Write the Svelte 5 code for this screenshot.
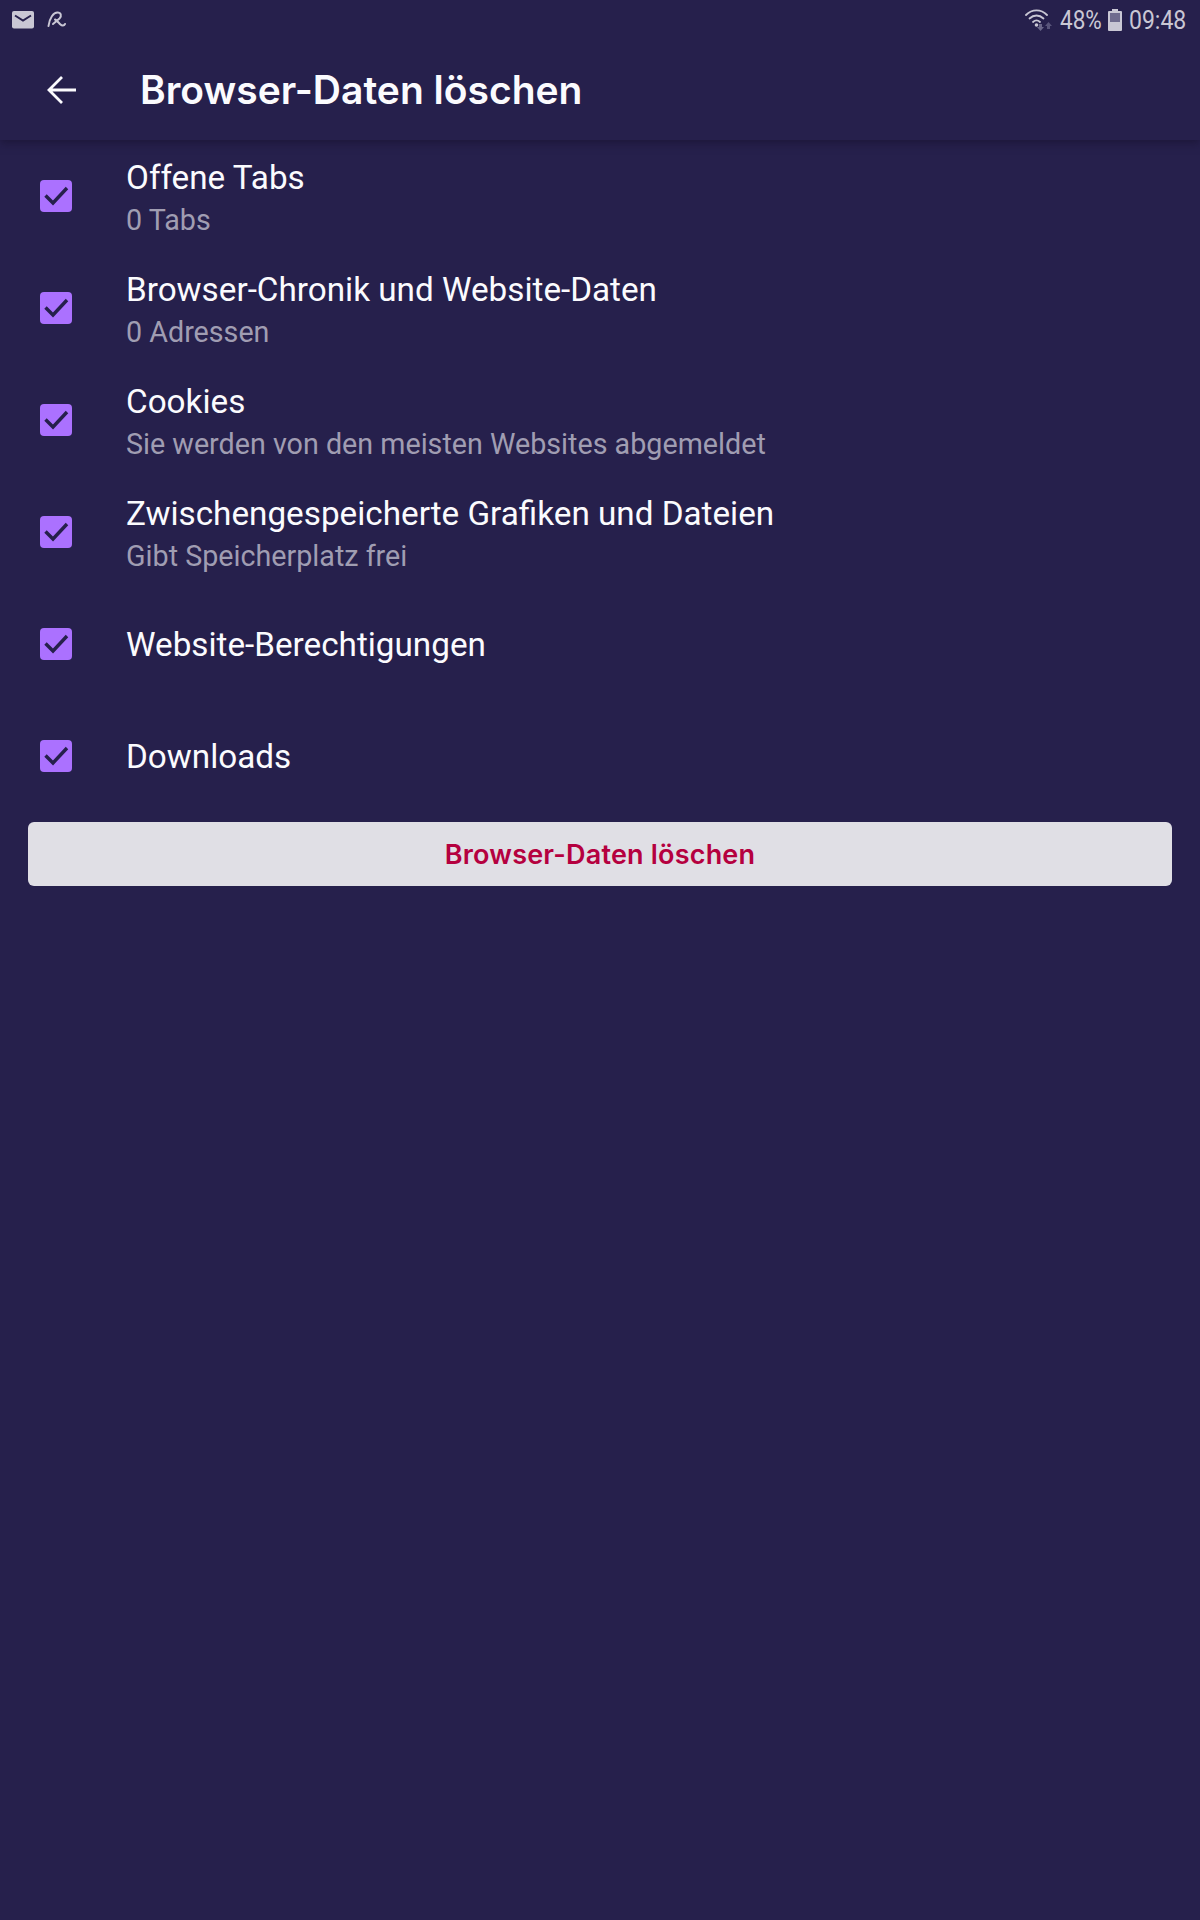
<script lang="ts">
  const rows = [
    { title: "Offene Tabs", sub: "0 Tabs" },
    { title: "Browser-Chronik und Website-Daten", sub: "0 Adressen" },
    { title: "Cookies", sub: "Sie werden von den meisten Websites abgemeldet" },
    { title: "Zwischengespeicherte Grafiken und Dateien", sub: "Gibt Speicherplatz frei" },
    { title: "Website-Berechtigungen", sub: "" },
    { title: "Downloads", sub: "" },
  ];
</script>

<main>
  <header class="top">
    <div class="status">
      <div class="left">
        <svg class="mail" width="22" height="18" viewBox="0 0 22 18" aria-hidden="true">
          <rect width="22" height="17.5" rx="2" fill="#c9c7d4" />
          <path d="M3 4.500 11 9.500 19 4.500" fill="none" stroke="#26204c" stroke-width="2" />
        </svg>
        <svg width="20" height="18" viewBox="0 0 20 18" aria-hidden="true">
          <path
            d="M1.500 15C2.500 7 6.500 1.500 10.500 1.500c3.500 0 4.500 3.500 2 6L6 13M8 8.500c2 1 3.500 3 5.500 5 1.500 1.500 3.500 1.500 4.500-.5"
            fill="none"
            stroke="#c9c7d4"
            stroke-width="2"
            stroke-linecap="round"
          />
        </svg>
      </div>
      <div class="right">
        <svg width="28" height="24" viewBox="0 0 28 24" aria-hidden="true">
          <g fill="none" stroke="#c9c7d4" stroke-width="1.800" stroke-linecap="round">
            <path d="M1 7C7 .8 16 .8 22 7" />
            <path d="M4.500 10.500c4.200-4 9.800-4 14 0" />
            <path d="M8 14c2.200-2 4.800-2 7 0" />
          </g>
          <circle cx="11.500" cy="17" r="1.800" fill="#c9c7d4" />
          <path d="M14 16h3v3h2l-3.500 4-3.500-4h2z" fill="#6b678a" />
          <path d="M22 21v-3h-2l3.500-4 3.500 4h-2v3z" fill="#58547a" />
        </svg>
        <span class="pct">48%</span>
        <svg width="14" height="22" viewBox="0 0 14 22" aria-hidden="true">
          <path d="M4 0h6v2h3a1 1 0 0 1 1 1v18a1 1 0 0 1-1 1H1a1 1 0 0 1-1-1V3a1 1 0 0 1 1-1h3z" fill="#c9c7d4" />
          <rect x="2" y="4" width="10" height="9" fill="#6f6b8e" />
        </svg>
        <span class="time">09:48</span>
      </div>
    </div>
    <div class="toolbar">
      <svg class="back" width="32" height="32" viewBox="0 0 32 32" aria-hidden="true">
        <path d="M30 16H4M16 3 3 16l13 13" fill="none" stroke="#fbfbfe" stroke-width="2.800" />
      </svg>
      <h1>Browser-Daten löschen</h1>
    </div>
  </header>

  <ul>
    {#each rows as r (r.title)}
      <li>
        <span class="check">
          <svg width="32" height="32" viewBox="0 0 32 32" aria-hidden="true">
            <path d="M5.500 15.500 13 23 27 8" fill="none" stroke="#26204c" stroke-width="3.400" />
          </svg>
        </span>
        <div class="text">
          <div class="title">{r.title}</div>
          {#if r.sub}<div class="sub">{r.sub}</div>{/if}
        </div>
      </li>
    {/each}
  </ul>

  <button>Browser-Daten löschen</button>
</main>

<style>
  :global(body) {
    background: #26204c;
  }
  main {
    height: 1920px;
    background: #26204c;
    font-family: Roboto, sans-serif;
    color: #fbfbfe;
    overflow: hidden;
  }
  .top {
    height: 140px;
    box-shadow: 0 3px 8px rgba(20, 14, 40, 0.5);
    position: relative;
  }
  .status {
    height: 44px;
    display: flex;
    justify-content: space-between;
    align-items: center;
    padding: 0 16px 4px 12px;
    box-sizing: border-box;
  }
  .left,
  .right {
    display: flex;
    align-items: center;
  }
  .left {
    gap: 13px;
  }
  .right {
    gap: 7px;
    color: #c9c7d4;
    font-size: 25px;
    line-height: 1;
  }
  .pct,
  .time {
    display: inline-block;
    transform-origin: left center;
    white-space: nowrap;
  }
  .pct {
    width: 41px;
    transform: scaleX(0.9);
  }
  .time {
    width: 55px;
    transform: scaleX(0.92);
  }
  .toolbar {
    height: 96px;
    display: flex;
    align-items: center;
    padding: 0 0 5px 46px;
    box-sizing: border-box;
  }
  .back {
    margin-right: 62px;
  }
  h1 {
    margin: 0;
    font-family: Inter, sans-serif;
    font-size: 39px;
    font-weight: 600;
  }
  ul {
    list-style: none;
    margin: 0;
    padding: 0;
  }
  li {
    height: 112px;
    display: flex;
    align-items: center;
    padding-left: 40px;
    box-sizing: border-box;
  }
  .check {
    width: 32px;
    height: 32px;
    border-radius: 4px;
    background: #ab71ff;
    margin-right: 54px;
    flex: none;
  }
  .check svg {
    display: block;
  }
  .text {
    padding-top: 2px;
  }
  .title {
    font-size: 33.250px;
    line-height: 46px;
  }
  .sub {
    font-size: 28.700px;
    line-height: 38px;
    color: #a09db2;
  }
  button {
    display: block;
    width: 1144px;
    height: 64px;
    margin: 10px 28px 0;
    border: 0;
    border-radius: 6px;
    background: #e0dfe5;
    color: #b5003f;
    font-family: Inter, sans-serif;
    font-size: 27px;
    font-weight: 600;
    letter-spacing: 0.2px;
  }
</style>
